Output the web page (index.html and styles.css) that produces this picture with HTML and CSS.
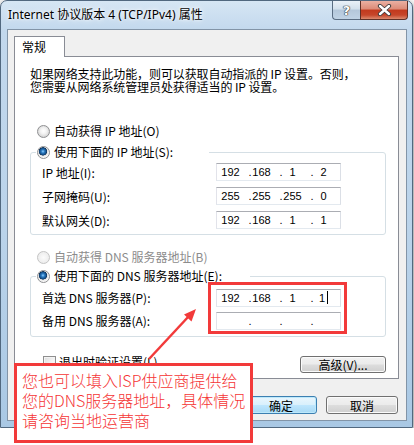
FILE: index.html
```html
<!DOCTYPE html>
<html>

<head>
    <meta charset="utf-8">
    <link rel="stylesheet" href="styles.css">
</head>

<body>
    <div class="window">
        <div class="titlebar">
            <span class="title">Internet 协议版本 4 (TCP/IPv4) 属性</span>
            <div class="caption-btns">
                <span class="cbtn help">?</span>
                <span class="cbtn close">
                    <svg width="15" height="12" viewBox="0 0 15 12">
                        <path d="M3 2 L12 10 M12 2 L3 10" stroke="#3b3b3b" stroke-width="4.2" stroke-linecap="round" fill="none"/>
                        <path d="M3 2 L12 10 M12 2 L3 10" stroke="#ffffff" stroke-width="2.4" stroke-linecap="round" fill="none"/>
                    </svg>
                </span>
            </div>
        </div>

        <div class="client">
            <div class="tabs">
                <span class="tab">常规</span>
            </div>
            <div class="page">
                <p class="desc">如果网络支持此功能，则可以获取自动指派的 IP 设置。否则，<br>您需要从网络系统管理员处获得适当的 IP 设置。</p>

                <div class="opt first"><span class="radio"></span>自动获得 IP 地址(O)</div>
                <fieldset class="group group-ip">
                    <legend class="opt legend-ip"><span class="radio checked"></span>使用下面的 IP 地址(S):</legend>
                    <div class="row">
                        <span class="label">IP 地址(I):</span>
                        <div class="ip"><span class="seg">192</span><span class="dot">.</span><span class="seg">168</span><span class="dot">.</span><span class="seg">1</span><span class="dot">.</span><span class="seg">2</span></div>
                    </div>
                    <div class="row">
                        <span class="label">子网掩码(U):</span>
                        <div class="ip"><span class="seg">255</span><span class="dot">.</span><span class="seg">255</span><span class="dot">.</span><span class="seg">255</span><span class="dot">.</span><span class="seg">0</span></div>
                    </div>
                    <div class="row">
                        <span class="label">默认网关(D):</span>
                        <div class="ip"><span class="seg">192</span><span class="dot">.</span><span class="seg">168</span><span class="dot">.</span><span class="seg">1</span><span class="dot">.</span><span class="seg">1</span></div>
                    </div>
                </fieldset>

                <div class="opt disabled dns-auto"><span class="radio"></span>自动获得 DNS 服务器地址(B)</div>
                <fieldset class="group group-dns">
                    <legend class="opt legend-dns"><span class="radio checked"></span>使用下面的 DNS 服务器地址(E):</legend>
                    <div class="row row-dns">
                        <span class="label">首选 DNS 服务器(P):</span>
                        <div class="ip"><span class="seg">192</span><span class="dot">.</span><span class="seg">168</span><span class="dot">.</span><span class="seg">1</span><span class="dot">.</span><span class="seg">1<span class="caret"></span></span></div>
                    </div>
                    <div class="row row-dns">
                        <span class="label">备用 DNS 服务器(A):</span>
                        <div class="ip"><span class="seg"></span><span class="dot">.</span><span class="seg"></span><span class="dot">.</span><span class="seg"></span><span class="dot">.</span><span class="seg"></span></div>
                    </div>
                </fieldset>

                <div class="bottom-row">
                    <div class="opt check"><span class="checkbox"></span>退出时验证设置(L)</div>
                    <button type="button" class="btn adv">高级(V)...</button>
                </div>
            </div>

            <div class="actions">
                <button type="button" class="btn ok">确定</button>
                <button type="button" class="btn">取消</button>
            </div>
        </div>
    </div>

    <!-- annotation drawn over the dialog -->
    <div class="mark"></div>
    <svg class="arrow" width="64" height="66" viewBox="140 300 64 66">
        <path d="M149 359 L189 316" stroke="#f23a3a" stroke-width="2.5" fill="none"/>
        <polygon points="196,309 191.5,321.5 184,314.5" fill="#f23a3a"/>
    </svg>
    <div class="note">
        您也可以填入ISP供应商提供给<br>您的DNS服务器地址，具体情况<br>请咨询当地运营商
    </div>
</body>

</html>
```

FILE: styles.css
```css
* {
    box-sizing: border-box;
}

body {
    margin: 0;
    background: #ffffff;
    font-family: "Noto Sans CJK SC", sans-serif;
    font-size: 12px;
    color: #000;
}

/* window frame */
.window {
    width: 413px;
    height: 428px;
    border: 1px solid #51687f;
    border-radius: 7px 7px 0 0;
    background: linear-gradient(180deg, #d6e6f4 0%, #c2d8ed 7%, #bad3ea 55%, #a9c8e4 100%);
    box-shadow: 0 3px 9px rgba(0, 0, 0, 0.6);
    display: flex;
    flex-direction: column;
    padding: 0 5px 6px 6px;
}

.titlebar {
    height: 28px;
    display: flex;
    justify-content: space-between;
    align-items: flex-start;
}

.title {
    font-family: "Noto Sans", "Noto Sans CJK SC", sans-serif;
    font-size: 12px;
    line-height: 16px;
    padding-top: 6px;
    padding-left: 1px;
    text-shadow: 0 0 6px #fff, 0 0 3px #fff;
}

.caption-btns {
    display: flex;
    margin-right: -1px;
}

.cbtn {
    height: 19px;
    display: flex;
    align-items: center;
    justify-content: center;
    border: 1px solid #5a6d82;
    border-top: none;
}

.help {
    width: 28px;
    border-right: none;
    border-radius: 0 0 0 4px;
    background: linear-gradient(180deg, #eaf1f8 0%, #d3e0ec 45%, #b4c7da 50%, #c0d3e5 100%);
    color: #fff;
    font-family: "DejaVu Sans", sans-serif;
    font-weight: bold;
    font-size: 13px;
    text-shadow: 0 0 1px #2c2c2c, 0 0 1px #2c2c2c, 0 0 1px #2c2c2c;
}

.close {
    width: 48px;
    border-color: #5e3128;
    border-radius: 0 0 4px 0;
    background: linear-gradient(180deg, #eab0a2 0%, #dc8b77 45%, #c2391d 50%, #c6462a 78%, #dc8a6e 100%);
}

/* client area */
.client {
    flex: 1;
    border: 1px solid #8294a7;
    background: #f0f0f0;
    padding: 6px 7px 0 6px;
}

.tabs {
    display: flex;
}

.tab {
    position: relative;
    width: 51px;
    height: 21px;
    margin-bottom: -1px;
    padding-left: 7px;
    line-height: 20px;
    background: #fff;
    border: 1px solid #898c95;
    border-bottom: none;
}

.page {
    background: #fff;
    border: 1px solid #898c95;
    padding: 10px 12px 5px 15px;
}

.desc {
    margin: 0;
    line-height: 13px;
    letter-spacing: -0.1px;
}

.opt {
    display: flex;
    align-items: center;
    height: 16px;
    line-height: 16px;
    white-space: nowrap;
}

.first {
    margin: 30px 0 0 7px;
}

.dns-auto {
    margin: 14px 0 0 7px;
}

.disabled {
    color: #8c8c8c;
}

.radio {
    width: 13px;
    height: 13px;
    margin-right: 4px;
    border-radius: 50%;
    border: 1px solid #8f9092;
    background: radial-gradient(circle at 50% 45%, #ffffff 0, #f2f2f2 3px, #d6d6d6 6px);
    flex-shrink: 0;
}

.radio.checked {
    background: radial-gradient(circle at 45% 40%, #8fd0ff 0, #2c7cc4 1.6px, #134b82 3.4px, #0b2f57 3.9px, #e2e2e2 4.4px, #f8f8f8 6px);
}

.disabled .radio {
    border-color: #c4c4c4;
    background: radial-gradient(circle, #fbfbfb 0, #ececec 6px);
}

.group {
    margin: 0;
    padding: 0 0 2px 0;
    border: 1px solid #d5dfe5;
    border-radius: 3px;
}

.group-ip {
    margin-top: 5px;
}

.group-dns {
    margin-top: 3px;
    padding: 2px 0 4px 0;
}

.group legend {
    margin-left: 5px;
    padding: 0 0 0 1px;
}

.legend-ip {
    width: 173px;
}

.legend-dns {
    width: 214px;
}

.row {
    display: flex;
    align-items: center;
    height: 24px;
    padding-left: 11px;
}

.row-dns {
    height: 23px;
}

.label {
    width: 174px;
    white-space: nowrap;
}

/* ip address control */
.ip {
    width: 125px;
    height: 18px;
    display: flex;
    align-items: center;
    border: 1px solid #abadb3;
    border-left-color: #e2e3ea;
    border-right-color: #dbdfe6;
    border-bottom-color: #e3e9ef;
    font-family: "Liberation Sans", sans-serif;
    font-size: 11px;
}

.seg {
    width: 31px;
    text-align: center;
    display: flex;
    align-items: center;
    justify-content: center;
}

.seg:first-child {
    margin-left: -2px;
}

.dot {
    width: 4px;
    margin-left: 2px;
    margin-right: -6px;
    text-align: center;
}

.caret {
    display: inline-block;
    width: 1px;
    height: 13px;
    margin-left: 2px;
    background: #000;
}

.bottom-row {
    display: flex;
    justify-content: space-between;
    align-items: flex-start;
    margin-top: 17px;
}

.check {
    margin-left: 13px;
}

.checkbox {
    width: 13px;
    height: 13px;
    margin-right: 3px;
    border: 1px solid #8f8f8f;
    background: linear-gradient(135deg, #dcdcdc 0%, #f6f6f6 60%, #ffffff 100%);
    box-shadow: inset 0 0 0 1px #f4f4f4;
}

/* buttons */
.btn {
    height: 17px;
    padding: 0;
    font-family: "Noto Sans CJK SC", sans-serif;
    font-size: 12px;
    line-height: 15px;
    color: #000;
    border: 1px solid #707070;
    border-radius: 3px;
    background: linear-gradient(180deg, #f2f2f2 0%, #ebebeb 48%, #dddddd 52%, #cfcfcf 100%);
    box-shadow: inset 0 0 0 1px #fbfbfb;
}

.adv {
    width: 86px;
    margin-top: 2px;
}

.actions {
    display: flex;
    justify-content: flex-end;
    gap: 9px;
    margin-top: 17px;
    padding-right: 1px;
}

.actions .btn {
    width: 72px;
    height: 18px;
}

.ok {
    border-color: #3c7fb1;
    background: linear-gradient(180deg, #eaf6fd 0%, #d9f0fc 48%, #bee6fd 52%, #a7d9f5 100%);
    box-shadow: inset 0 0 0 1px #bde9fb;
}

/* red annotation */
.mark {
    position: absolute;
    left: 208px;
    top: 282px;
    width: 139px;
    height: 52px;
    border: 3px solid #f23a3a;
}

.arrow {
    position: absolute;
    left: 140px;
    top: 300px;
}

.note {
    position: absolute;
    left: 14px;
    top: 363px;
    width: 239px;
    height: 80px;
    border: 3px solid #f23a3a;
    background: #fff;
    padding: 4px 0 0 5px;
    color: #f53535;
    font-family: "Noto Sans CJK SC", sans-serif;
    font-weight: 300;
    font-size: 16px;
    line-height: 20px;
    white-space: nowrap;
}
```
